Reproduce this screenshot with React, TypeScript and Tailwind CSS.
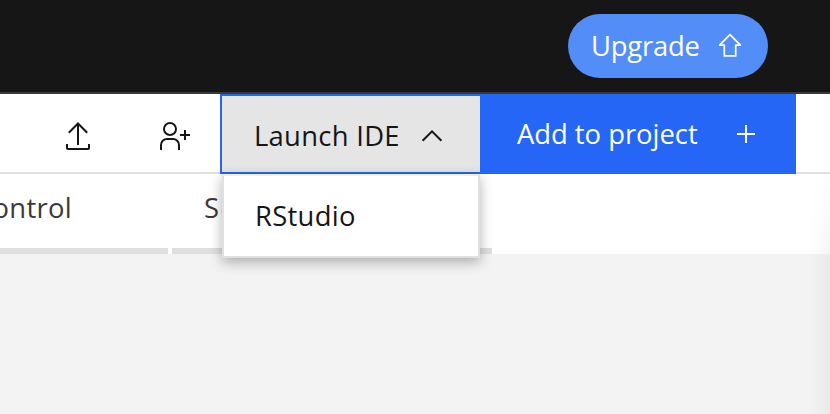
import React from "react";

function Label({ text, className }: { text: string; className: string }) {
  return <span className={`block whitespace-pre leading-[36px] ${className}`}>{text}</span>;
}

export default function App() {
  return (
    <div className="relative flex h-[414px] w-[830px] flex-col overflow-hidden bg-[#f3f3f3] font-['Open_Sans',sans-serif] text-[27.4px] text-[#161616]">
      <header className="flex h-[94px] shrink-0 justify-end border-b-2 border-[#393939] bg-[#161616] pt-[14px] pr-[62px]">
        <button className="flex h-16 w-[200px] items-start rounded-full bg-[#538df8] pl-[23px] text-white">
          <Label text="Upgrade" className="mt-[14px] w-[125px] text-left tracking-[-0.2px]" />
          <svg className="mt-[18px]" width="28" height="28" viewBox="0 0 28 28" fill="none" stroke="currentColor" strokeWidth="1.7" strokeLinejoin="round">
            <path d="M14 2.7 3.6 13.1h4.7v10.8h11.4V13.1h4.7z" />
          </svg>
        </button>
      </header>

      <div className="flex h-20 shrink-0 bg-white">
        <div className="flex flex-1 border-b-2 border-[#e0e0e0]">
          <svg className="mt-[26px] ml-[62px]" width="32" height="32" viewBox="0 0 32 32" fill="none" stroke="currentColor" strokeWidth="2">
            <path d="M16 25V3.5M6.8 12.8 16 3.5l9.2 9.3M5 24v4.2q0 .8.8.8h20.4q.8 0 .8-.8V24" />
          </svg>
          <svg className="mt-[26px] ml-[64px]" width="32" height="32" viewBox="0 0 32 32" fill="none" stroke="currentColor" strokeWidth="2">
            <circle cx="12" cy="9" r="6" />
            <path d="M3 30v-5a6 6 0 0 1 6-6h6a6 6 0 0 1 6 6v5M22 15h10M27 10v10" />
          </svg>
        </div>
        <button className="flex w-[260px] border-y-2 border-l-2 border-[#2566f6] bg-[#e5e5e5] pl-[32px]">
          <Label text="Launch IDE" className="mt-[22px] w-[164px] text-left tracking-[0.3px]" />
          <svg className="mt-[27px]" width="28" height="28" viewBox="0 0 28 28" fill="none" stroke="currentColor" strokeWidth="2">
            <path d="m4.6 17.8 9.4-9.4 9.4 9.4" />
          </svg>
        </button>
        <button className="flex w-[316px] bg-[#2566f6] pl-[37px] text-white">
          <Label text="Add to project" className="mt-[22px] w-[215px] text-left tracking-[-0.02px]" />
          <svg className="mt-[26px]" width="28" height="28" viewBox="0 0 28 28" fill="none" stroke="currentColor" strokeWidth="2">
            <path d="M14 5v18M5 14h18" />
          </svg>
        </button>
        <div className="w-[34px] border-b-2 border-[#e0e0e0]" />
      </div>

      <nav className="flex h-20 shrink-0 gap-1 bg-white text-[#393939]">
        <div className="flex w-[168px] justify-end overflow-hidden border-b-[6px] border-[#dfdfdf] pr-[96px]">
          <Label text="Access Control" className="mt-[16px] tracking-[0.3px]" />
        </div>
        <div className="w-[320px] border-b-[6px] border-[#dfdfdf] pl-8">
          <Label text="Settings" className="mt-[16px] tracking-[1.4px]" />
        </div>
      </nav>

      <div className="absolute top-[174px] left-[222px] h-[84px] w-[258px] border-2 border-[#e0e0e0] border-t-[#f0f0f0] bg-white pl-[31px] shadow-[0_4px_12px_rgba(0,0,0,0.3)]">
        <Label text="RStudio" className="mt-[22px] tracking-[0.3px]" />
      </div>
      <div className="absolute top-[174px] right-0 h-60 w-5 bg-gradient-to-r from-transparent to-black/4 [mask-image:linear-gradient(to_bottom,transparent,black_80px)]" />
    </div>
  );
}
